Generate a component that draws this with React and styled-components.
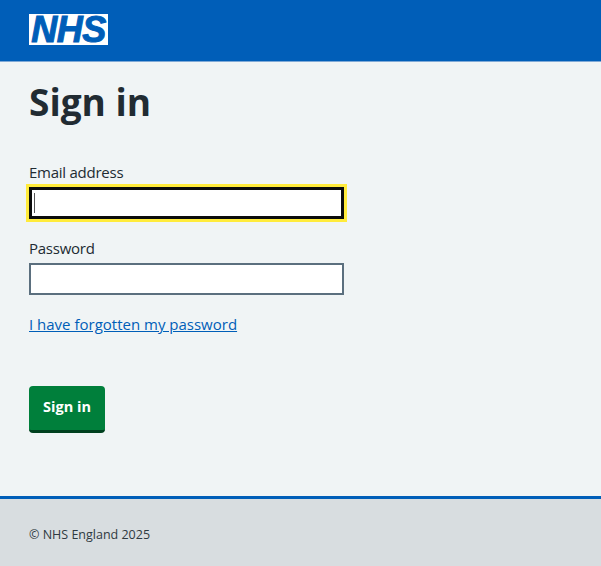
import React from 'react'
import styled, { createGlobalStyle } from 'styled-components'

const GlobalStyle = createGlobalStyle`
    html, body { margin: 0; padding: 0; }
    body {
        background: #f0f4f5;
        font-family: "Open Sans", "Noto Sans", sans-serif;
        color: #212b32;
    }
`

const Page = styled.div`
    display: flex;
    flex-direction: column;
    height: 566px;
    overflow: hidden;
`

const Header = styled.header`
    height: 62px;
    flex: none;
    background: #005eb8;
    padding: 14px 29px 0;
    box-sizing: border-box;
    border-bottom: 1px solid #7fa9d6;
`

const Logo = styled.div`
    width: 79px;
    height: 31px;
    background: #fff;
    color: #005eb8;
    display: flex;
    align-items: center;
    justify-content: center;
    font-family: "Liberation Sans", Arial, sans-serif;
    font-size: 36px;
    line-height: 31px;
    font-weight: 700;
    font-style: italic;
    letter-spacing: -0.5px;
    -webkit-text-stroke: 1px #005eb8;
`

const Main = styled.main`
    flex: 1;
    padding: 15px 29px 0;
`

const Title = styled.h1`
    margin: 0 0 35px;
    font-size: 37px;
    line-height: 50px;
    font-weight: 700;
`

const Field = styled.div`
    width: 315px;
    margin-bottom: 19px;
`

const Label = styled.label`
    display: block;
    font-size: 15px;
    line-height: 20px;
    letter-spacing: -0.25px;
    margin-bottom: 5px;
`

const InputWrap = styled.div`
    position: relative;
    height: 32px;
`

const Input = styled.input`
    display: block;
    width: 100%;
    height: 32px;
    box-sizing: border-box;
    background: #fff;
    border: 2px solid ${props => props.$focused ? '#0b0c0c' : '#5b6f7e'};
    border-radius: 0;
    padding: 0 4px;
    outline: ${props => props.$focused ? '3px solid #ffeb3b' : 'none'};
    box-shadow: ${props => props.$focused ? 'inset 0 0 0 1px #0b0c0c' : 'none'};
`

const Caret = styled.span`
    position: absolute;
    left: 5px;
    top: 6px;
    width: 1px;
    height: 20px;
    background: #555;
`

const ForgotLink = styled.a`
    display: block;
    margin-top: 17px;
    font-size: 15px;
    line-height: 20px;
    color: #005eb8;
    text-decoration: underline;
    cursor: pointer;
`

const SignIn = styled.button`
    display: block;
    margin-top: 52px;
    width: 76px;
    height: 47px;
    box-sizing: border-box;
    padding: 0 0 4px;
    background: #007f3b;
    color: #fff;
    border: none;
    border-bottom: 3px solid #00401e;
    border-radius: 4px;
    font-family: inherit;
    font-size: 14.5px;
    font-weight: 700;
    cursor: pointer;
`

const Footer = styled.footer`
    height: 70px;
    flex: none;
    box-sizing: border-box;
    background: #d8dde0;
    border-top: 3px solid #005eb8;
    padding: 4px 29px 0;
    display: flex;
    align-items: center;
    font-size: 12.5px;
    color: #2f3a41;
`

export default function App() {
    return (
        <Page>
            <GlobalStyle />
            <Header>
                <Logo>NHS</Logo>
            </Header>
            <Main>
                <Title>Sign in</Title>
                <Field>
                    <Label htmlFor="email">Email address</Label>
                    <InputWrap>
                        <Input id="email" type="email" $focused />
                        <Caret />
                    </InputWrap>
                </Field>
                <Field>
                    <Label htmlFor="password">Password</Label>
                    <InputWrap>
                        <Input id="password" type="password" />
                    </InputWrap>
                </Field>
                <ForgotLink>I have forgotten my password</ForgotLink>
                <SignIn>Sign in</SignIn>
            </Main>
            <Footer>© NHS England 2025</Footer>
        </Page>
    )
}
